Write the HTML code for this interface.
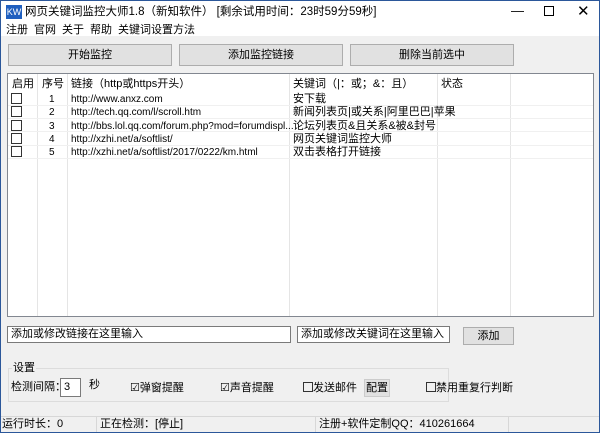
<!DOCTYPE html>
<html><head><meta charset="utf-8"><style>
*{margin:0;padding:0;box-sizing:border-box}
body{width:600px;height:433px;overflow:hidden;background:#f0f0f0;font-family:"Liberation Sans","Noto Sans CJK SC",sans-serif;font-size:11px;color:#000;position:relative;line-height:13px}
.a{position:absolute;white-space:nowrap;line-height:13px}
.u{font-size:10px}
.frame{position:absolute;left:0;top:0;width:600px;height:433px;border:1px solid #2b579a;pointer-events:none}
.btn{position:absolute;background:#e1e1e1;border:1px solid #adadad;text-align:center;line-height:20px}
.inp{position:absolute;background:#fff;border:1px solid #7a7a7a;padding-left:3px;line-height:15px}
.cb{position:absolute;width:11px;height:11px;border:1px solid #333;background:#fff}
.vl{position:absolute;width:1px;background:#e5e5e5}
.hl{position:absolute;height:1px;background:#f0f0f0}
</style></head><body>
<div class="a" style="left:0;top:0;width:600px;height:36px;background:#fff"></div>
<div class="a" style="left:6px;top:5px;width:16px;height:14px;background:#1f5fbf;color:#fff;font-size:9px;line-height:14px;text-align:center">KW</div>
<div class="a" style="left:25px;top:6px;font-size:11.5px">网页关键词监控大师1.8（新知软件） [剩余试用时间：23时59分59秒]</div>
<div class="a" style="left:511px;top:4px;font-size:13px">—</div>
<div class="a" style="left:544px;top:6px;width:10px;height:10px;border:1px solid #000"></div>
<div class="a" style="left:577px;top:4px;font-size:15px;line-height:15px">✕</div>
<div class="a" style="left:6px;top:24px">注册</div>
<div class="a" style="left:34px;top:24px">官网</div>
<div class="a" style="left:62px;top:24px">关于</div>
<div class="a" style="left:90px;top:24px">帮助</div>
<div class="a" style="left:118px;top:24px">关键词设置方法</div>
<div class="btn" style="left:8px;top:44px;width:164px;height:22px">开始监控</div>
<div class="btn" style="left:179px;top:44px;width:164px;height:22px">添加监控链接</div>
<div class="btn" style="left:350px;top:44px;width:164px;height:22px">删除当前选中</div>
<div class="a" style="left:7px;top:73px;width:587px;height:244px;background:#fff;border:1px solid #828790"></div>
<div class="vl" style="left:37px;top:74px;height:242px"></div>
<div class="vl" style="left:67px;top:74px;height:242px"></div>
<div class="vl" style="left:289px;top:74px;height:242px"></div>
<div class="vl" style="left:437px;top:74px;height:242px"></div>
<div class="vl" style="left:510px;top:74px;height:242px"></div>
<div class="hl" style="left:8px;top:105px;width:585px"></div>
<div class="hl" style="left:8px;top:118px;width:585px"></div>
<div class="hl" style="left:8px;top:131px;width:585px"></div>
<div class="hl" style="left:8px;top:145px;width:585px"></div>
<div class="hl" style="left:8px;top:158px;width:585px"></div>
<div class="a" style="left:12px;top:78px">启用</div>
<div class="a" style="left:42px;top:78px">序号</div>
<div class="a" style="left:71px;top:78px">链接（http或https开头）</div>
<div class="a" style="left:293px;top:78px">关键词（|：或；&amp;：且）</div>
<div class="a" style="left:441px;top:78px">状态</div>
<div class="cb" style="left:11px;top:93px"></div>
<div class="cb" style="left:11px;top:106px"></div>
<div class="cb" style="left:11px;top:120px"></div>
<div class="cb" style="left:11px;top:133px"></div>
<div class="cb" style="left:11px;top:146px"></div>
<div class="a u" style="left:49px;top:93px">1</div>
<div class="a u" style="left:49px;top:106px">2</div>
<div class="a u" style="left:49px;top:120px">3</div>
<div class="a u" style="left:49px;top:133px">4</div>
<div class="a u" style="left:49px;top:146px">5</div>
<div class="a u" style="left:71px;top:93px">http://www.anxz.com</div>
<div class="a u" style="left:71px;top:106px">http://tech.qq.com/l/scroll.htm</div>
<div class="a u" style="left:71px;top:120px">http://bbs.lol.qq.com/forum.php?mod=forumdispl...</div>
<div class="a u" style="left:71px;top:133px">http://xzhi.net/a/softlist/</div>
<div class="a u" style="left:71px;top:146px">http://xzhi.net/a/softlist/2017/0222/km.html</div>
<div class="a" style="left:293px;top:93px">安下载</div>
<div class="a" style="left:293px;top:106px">新闻列表页|或关系|阿里巴巴|苹果</div>
<div class="a" style="left:293px;top:120px">论坛列表页&amp;且关系&amp;被&amp;封号</div>
<div class="a" style="left:293px;top:133px">网页关键词监控大师</div>
<div class="a" style="left:293px;top:146px">双击表格打开链接</div>
<div class="inp" style="left:7px;top:326px;width:284px;height:17px">添加或修改链接在这里输入</div>
<div class="inp" style="left:297px;top:326px;width:153px;height:17px">添加或修改关键词在这里输入</div>
<div class="btn" style="left:463px;top:327px;width:51px;height:18px;line-height:16px">添加</div>
<div class="a" style="left:8px;top:368px;width:441px;height:34px;border:1px solid #dcdcdc"></div>
<div class="a" style="left:12px;top:362px;background:#f0f0f0;padding:0 1px">设置</div>
<div class="a" style="left:11px;top:381px">检测间隔：</div>
<div class="inp" style="left:60px;top:378px;width:21px;height:19px;line-height:17px">3</div>
<div class="a" style="left:89px;top:379px">秒</div>
<div class="a" style="left:130px;top:382px">☑弹窗提醒</div>
<div class="a" style="left:220px;top:382px">☑声音提醒</div>
<div class="a" style="left:303px;top:382px"><span style="display:inline-block;width:10px;height:10px;border:1px solid #333;vertical-align:-1px"></span>发送邮件</div>
<div class="btn" style="left:364px;top:379px;width:26px;height:18px;line-height:16px;border-color:#ccc">配置</div>
<div class="a" style="left:426px;top:382px"><span style="display:inline-block;width:10px;height:10px;border:1px solid #333;vertical-align:-1px"></span>禁用重复行判断</div>
<div class="a" style="left:1px;top:416px;width:598px;height:1px;background:#d7d7d7"></div>
<div class="a" style="left:96px;top:417px;width:1px;height:15px;background:#d7d7d7"></div>
<div class="a" style="left:315px;top:417px;width:1px;height:15px;background:#d7d7d7"></div>
<div class="a" style="left:508px;top:417px;width:1px;height:15px;background:#d7d7d7"></div>
<div class="a" style="left:2px;top:418px">运行时长：0</div>
<div class="a" style="left:100px;top:418px">正在检测：[停止]</div>
<div class="a" style="left:319px;top:418px">注册+软件定制QQ：410261664</div>
<div class="frame"></div>
</body></html>
